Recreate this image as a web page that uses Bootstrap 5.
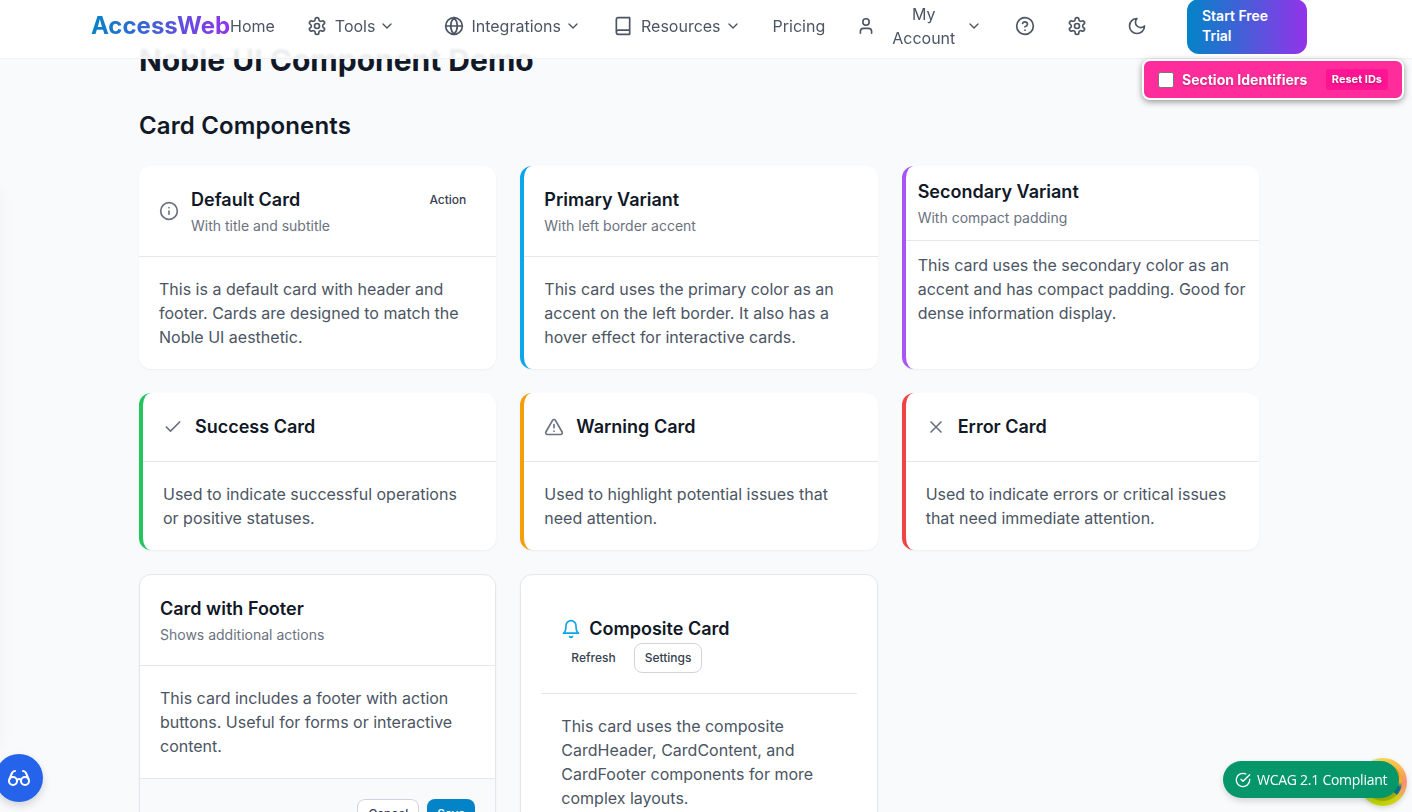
<!DOCTYPE html>
<html lang="en">
<head>
<meta charset="utf-8">
<title>AccessWeb – Noble UI Component Demo</title>
<meta name="viewport" content="width=device-width, initial-scale=1">
<link href="https://cdn.jsdelivr.net/npm/bootstrap@5.3.0/dist/css/bootstrap.min.css" rel="stylesheet">
<script src="https://cdn.jsdelivr.net/npm/bootstrap@5.3.0/dist/js/bootstrap.bundle.min.js" defer></script>
<style>
html,body{height:812px;overflow:hidden}
body{font-family:Inter,"Liberation Sans",sans-serif;font-size:16px;line-height:24px;color:#4b5563;background:#f8fafc}
svg{fill:none;stroke:currentColor;stroke-width:2;stroke-linecap:round;stroke-linejoin:round;flex:none;display:block}
.i20{width:20px;height:20px}
.i16{width:16px;height:16px}
.topbar{height:59px;padding:0 105px 6px 91px;background:rgba(255,255,255,.92);backdrop-filter:blur(1px);border-bottom:1px solid #f0f1f3;color:#4b5563;z-index:10}
.topbar a{color:inherit;text-decoration:none;white-space:nowrap}
.topbar .brand{font-size:24px;line-height:32px;font-weight:700;width:139px;background:linear-gradient(90deg,#0284c7,#9333ea);-webkit-background-clip:text;background-clip:text;color:transparent}
.menu-tools{margin-left:32px}.menu-int{margin-left:49px}.menu-int .i20{margin-right:7px!important}.menu-res{margin-left:32px}
.menu-price{margin-left:32px}.menu-acc{margin-left:33px}
.acc-label{margin:0 11px 0 18px}
.gap-l{margin-left:40px}.gap-r{margin-right:40px}
.topbar .cta{width:120px;height:55px;border-radius:12px;padding:7px 15px;font-size:14px;line-height:20px;font-weight:600;background:linear-gradient(90deg,#0284c7,#9333ea);color:#fff;white-space:normal}
.page{width:1120px;margin-left:139px;margin-top:-17px;padding-top:59px}
h1{font-size:30px;line-height:36px;font-weight:700;color:#111827;margin:0 0 32px}
h2{font-size:24px;line-height:32px;font-weight:600;letter-spacing:.13px;color:#111827;margin:0 0 24px}
.cards{display:grid;grid-template-columns:repeat(3,1fr);gap:24px;align-items:start}
.panel{--p:20px;background:#fff;border-radius:12px;overflow:hidden;box-shadow:0 1px 2px rgba(0,0,0,.05);height:100%}
.accent{border-left:4px solid}
.a-primary{border-color:#0ea5e9}.a-secondary{border-color:#a855f7}.a-success{border-color:#22c55e}.a-warning{border-color:#f59e0b}.a-error{border-color:#ef4444}
.compact{--p:12px}
.outlined{border:1px solid #e5e7eb}
.nested{padding:20px}
.head{padding:var(--p);border-bottom:1px solid #e5e7eb}
.head svg{color:#6b7280;stroke-width:2}
.head .bell{color:#0ea5e9}
.head h3{font-size:18px;line-height:28px;font-weight:600;color:#111827;margin:0}
.sub{font-size:14px;line-height:20px;color:#6b7280;margin:2px 0 0}
.content-pad{padding:var(--p);margin:0}
.foot{padding:20px;background:#f9fafb;border-top:1px solid #e5e7eb}
.sbtn{font-size:12px;line-height:16px;font-weight:500;padding:6px 10px;border-radius:8px;border:0;color:#374151;background:transparent}
.sbtn.line{border:1px solid #d1d5db;background:#fff}
.sbtn.solid{background:#0284c7;color:#fff}
.ids{position:fixed;left:1142px;top:59px;width:262px;height:41px;border:2px solid #fff;border-radius:8px;background:#ff2d9b;box-shadow:0 2px 6px rgba(0,0,0,.4);color:#fff;font-size:14px;font-weight:700;padding:0 14px;z-index:20;text-shadow:0 1px 2px rgba(0,0,0,.3);white-space:nowrap}
.box{width:16px;height:16px;background:#fff;border:1px solid #767676;border-radius:2.5px;margin-right:8px}
.reset{font-size:11px;line-height:13px;padding:4px 6px;background:#ff1493;border-radius:3px}
.glasses{position:fixed;left:-5px;top:754px;width:48px;height:48px;border-radius:50%;background:#2563eb;color:#fff;box-shadow:0 4px 8px rgba(0,0,0,.15)}
.edge{position:fixed;left:-20px;top:190px;width:20px;height:560px;box-shadow:0 0 15px rgba(0,0,0,.04)}
.wheel{position:fixed;left:1359px;top:758px;width:48px;height:48px;border-radius:50%;background:conic-gradient(#fcd34d,#fdba4d 50deg,#fb8f72 90deg,#f2a65a 115deg,#d4d21c 140deg,#c4d600 190deg,#bbdf30 240deg,#86efac 300deg,#b7e88a 330deg,#fcd34d);box-shadow:0 2px 5px rgba(0,0,0,.15)}
.wheel::before{content:"";position:absolute;inset:5px;border-radius:50%;background:conic-gradient(#facc15,#f59e0b 50deg,#fbbf24 90deg,#0e7490 108deg,#0e7490 132deg,#a8b80c 134deg,#9dbb0c 200deg,#facc15)}
.wcag{position:fixed;left:1223px;top:761px;width:176px;height:37px;border-radius:19px;background:#059669;color:#fff;font:14px/20px "Open Sans","Noto Sans",sans-serif;letter-spacing:-.26px;padding-left:12px;box-shadow:0 3px 6px rgba(0,0,0,.15);white-space:nowrap}
.wcag svg{margin-right:6px}
</style>
</head>
<body>
<svg width="0" height="0" class="position-absolute"><defs>
<symbol id="gear" viewBox="0 0 24 24"><path d="M12.22 2h-.44a2 2 0 0 0-2 2v.18a2 2 0 0 1-1 1.73l-.43.25a2 2 0 0 1-2 0l-.15-.08a2 2 0 0 0-2.73.73l-.22.38a2 2 0 0 0 .73 2.73l.15.1a2 2 0 0 1 1 1.72v.51a2 2 0 0 1-1 1.74l-.15.09a2 2 0 0 0-.73 2.73l.22.38a2 2 0 0 0 2.73.73l.15-.08a2 2 0 0 1 2 0l.43.25a2 2 0 0 1 1 1.73V20a2 2 0 0 0 2 2h.44a2 2 0 0 0 2-2v-.18a2 2 0 0 1 1-1.73l.43-.25a2 2 0 0 1 2 0l.15.08a2 2 0 0 0 2.73-.73l.22-.39a2 2 0 0 0-.73-2.73l-.15-.08a2 2 0 0 1-1-1.74v-.5a2 2 0 0 1 1-1.74l.15-.09a2 2 0 0 0 .73-2.73l-.22-.38a2 2 0 0 0-2.73-.73l-.15.08a2 2 0 0 1-2 0l-.43-.25a2 2 0 0 1-1-1.73V4a2 2 0 0 0-2-2z"/><circle cx="12" cy="12" r="3"/></symbol>
<symbol id="chev" viewBox="0 0 24 24"><path d="m6 9 6 6 6-6"/></symbol>
</defs></svg>

<nav class="topbar fixed-top d-flex align-items-center">
  <a class="brand" href="#">AccessWeb</a>
  <a href="#">Home</a>
  <a href="#" class="menu-tools d-flex align-items-center"><svg class="i20 me-2"><use href="#gear"/></svg>Tools<svg class="i16 ms-1"><use href="#chev"/></svg></a>
  <a href="#" class="menu-int d-flex align-items-center"><svg class="i20 me-2" viewBox="0 0 24 24"><circle cx="12" cy="12" r="10"/><path d="M12 2a14.5 14.5 0 0 0 0 20 14.5 14.5 0 0 0 0-20M2 12h20"/></svg>Integrations<svg class="i16 ms-1"><use href="#chev"/></svg></a>
  <a href="#" class="menu-res d-flex align-items-center"><svg class="i20 me-2" viewBox="0 0 24 24"><path d="M4 19.5v-15A2.5 2.5 0 0 1 6.500 2H20v20H6.500a2.500 2.500 0 0 1 0-5H20"/></svg>Resources<svg class="i16 ms-1"><use href="#chev"/></svg></a>
  <a href="#" class="menu-price">Pricing</a>
  <a href="#" class="menu-acc d-flex align-items-center"><svg width="16" height="20" viewBox="2 2 20 20"><path d="M19 21v-2a4 4 0 0 0-4-4H9a4 4 0 0 0-4 4v2"/><circle cx="12" cy="7" r="4"/></svg><span class="acc-label text-center">My<br>Account</span><svg class="i16"><use href="#chev"/></svg></a>
  <div class="d-flex align-items-center ms-auto">
    <a href="#"><svg class="i20" viewBox="0 0 24 24"><circle cx="12" cy="12" r="10"/><path d="M9.090 9a3 3 0 0 1 5.830 1c0 2-3 3-3 3M12 17h.01"/></svg></a>
    <a href="#" class="ms-4 ps-2"><svg class="i20"><use href="#gear"/></svg></a>
    <a href="#" class="gap-l gap-r"><svg class="i20" viewBox="0 0 24 24" stroke="#6b7280"><path d="M12 3a6 6 0 0 0 9 9 9 9 0 1 1-9-9Z"/></svg></a>
    <a href="#" class="cta">Start Free Trial</a>
  </div>
</nav>

<main class="page">
  <h1>Noble UI Component Demo</h1>
  <h2>Card Components</h2>
  <div class="cards">
    <section class="panel">
      <div class="head d-flex align-items-center"><svg class="i20" viewBox="0 0 24 24"><circle cx="12" cy="12" r="10"/><path d="M12 16v-4M12 8h.01"/></svg><div class="ms-2 ps-1 flex-grow-1"><h3>Default Card</h3><p class="sub">With title and subtitle</p></div><button class="sbtn align-self-start">Action</button></div>
      <p class="content-pad">This is a default card with header and footer. Cards are designed to match the Noble UI aesthetic.</p>
    </section>
    <section class="panel accent a-primary">
      <div class="head"><h3>Primary Variant</h3><p class="sub">With left border accent</p></div>
      <p class="content-pad">This card uses the primary color as an accent on the left border. It also has a hover effect for interactive cards.</p>
    </section>
    <section class="panel accent a-secondary compact">
      <div class="head"><h3>Secondary Variant</h3><p class="sub">With compact padding</p></div>
      <p class="content-pad">This card uses the secondary color as an accent and has compact padding. Good for dense information display.</p>
    </section>
    <section class="panel accent a-success">
      <div class="head d-flex align-items-center"><svg class="i20" viewBox="0 0 24 24"><path d="M20 6 9 17l-5-5"/></svg><h3 class="ms-2 ps-1">Success Card</h3></div>
      <p class="content-pad">Used to indicate successful operations or positive statuses.</p>
    </section>
    <section class="panel accent a-warning">
      <div class="head d-flex align-items-center"><svg class="i20" viewBox="0 0 24 24"><path d="m21.730 18-8-14a2 2 0 0 0-3.480 0l-8 14A2 2 0 0 0 4 21h16a2 2 0 0 0 1.730-3M12 9v4M12 17h.01"/></svg><h3 class="ms-2 ps-1">Warning Card</h3></div>
      <p class="content-pad">Used to highlight potential issues that need attention.</p>
    </section>
    <section class="panel accent a-error">
      <div class="head d-flex align-items-center"><svg class="i20" viewBox="0 0 24 24"><path d="M18 6 6 18M6 6l12 12"/></svg><h3 class="ms-2 ps-1">Error Card</h3></div>
      <p class="content-pad">Used to indicate errors or critical issues that need immediate attention.</p>
    </section>
    <section class="panel outlined">
      <div class="head"><h3>Card with Footer</h3><p class="sub">Shows additional actions</p></div>
      <p class="content-pad">This card includes a footer with action buttons. Useful for forms or interactive content.</p>
      <div class="foot d-flex justify-content-end gap-2"><button class="sbtn line">Cancel</button><button class="sbtn solid">Save</button></div>
    </section>
    <section class="panel outlined nested">
      <div class="head"><div class="d-flex align-items-center"><svg class="i20 bell" viewBox="0 0 24 24"><path d="M6 8a6 6 0 0 1 12 0c0 7 3 9 3 9H3s3-2 3-9M10.300 21a1.940 1.940 0 0 0 3.400 0"/></svg><h3 class="ms-2">Composite Card</h3></div>
      <div class="d-flex gap-2"><button class="sbtn">Refresh</button><button class="sbtn line">Settings</button></div></div>
      <p class="content-pad">This card uses the composite CardHeader, CardContent, and CardFooter components for more complex layouts.</p>
    </section>
  </div>
</main>

<div class="ids d-flex align-items-center"><span class="box"></span><span>Section Identifiers</span><span class="reset ms-auto">Reset IDs</span></div>
<div class="edge"></div>
<div class="glasses d-flex align-items-center justify-content-center"><svg width="24" height="24" viewBox="0 0 24 24"><circle cx="6" cy="15" r="4"/><circle cx="18" cy="15" r="4"/><path d="M14 15a2 2 0 0 0-2-2 2 2 0 0 0-2 2M2.500 13 5 7c.7-1.300 1.400-2 3-2M21.500 13 19 7c-.7-1.300-1.500-2-3-2"/></svg></div>
<div class="wheel"></div>
<div class="wcag d-flex align-items-center"><svg class="i16" viewBox="0 0 24 24"><path d="M22 11.080V12a10 10 0 1 1-5.930-9.140M22 4 12 14.010l-3-3"/></svg>WCAG 2.1 Compliant</div>
</body>
</html>
